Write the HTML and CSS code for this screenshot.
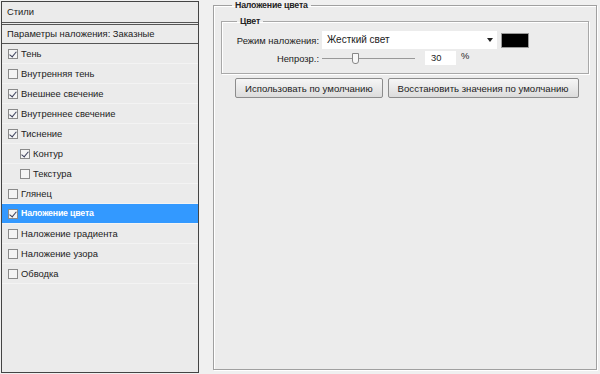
FILE: index.html
```html
<!DOCTYPE html>
<html lang="ru">
<head>
    <meta charset="UTF-8">
    <title>Стиль слоя</title>
    <link rel="stylesheet" href="styles.css">
</head>
<body>
    <div class="dialog">
        <aside class="styles-panel">
            <div class="panel-head">Стили</div>
            <div class="panel-sub">Параметры наложения: Заказные</div>
            <ul class="style-list">
                <li><span class="box checked"></span>Тень</li>
                <li><span class="box"></span>Внутренняя тень</li>
                <li><span class="box checked"></span>Внешнее свечение</li>
                <li><span class="box checked"></span>Внутреннее свечение</li>
                <li><span class="box checked"></span>Тиснение</li>
                <li class="sub"><span class="box checked"></span>Контур</li>
                <li class="sub"><span class="box"></span>Текстура</li>
                <li><span class="box"></span>Глянец</li>
                <li class="active"><span class="box checked"></span>Наложение цвета</li>
                <li><span class="box"></span>Наложение градиента</li>
                <li><span class="box"></span>Наложение узора</li>
                <li><span class="box"></span>Обводка</li>
            </ul>
        </aside>

        <fieldset class="options">
            <legend>Наложение цвета</legend>
            <fieldset class="group">
                <legend>Цвет</legend>
                <div class="row">
                    <label>Режим наложения:</label>
                    <div class="select">Жесткий свет<span class="arrow"></span></div>
                    <div class="swatch"></div>
                </div>
                <div class="row">
                    <label>Непрозр.:</label>
                    <div class="slider"><span class="thumb"></span></div>
                    <div class="num">30</div>
                    <span class="unit">%</span>
                </div>
            </fieldset>
            <div class="buttons">
                <button>Использовать по умолчанию</button>
                <button>Восстановить значения по умолчанию</button>
            </div>
        </fieldset>
    </div>
</body>
</html>
```

FILE: styles.css
```css
body {
    margin: 0;
    background: #f0f0f0;
    font-family: 'Liberation Sans', Arial, sans-serif;
    font-size: 9.4px;
    color: #222;
}

.dialog {
    display: flex;
    height: 374px;
}

/* left list */
.styles-panel {
    width: 196px;
    height: 370px;
    margin: 1px 0 0 1px;
    border: 1px solid #444;
    background: #ebebeb;
    display: flex;
    flex-direction: column;
}

.panel-head {
    height: 20px;
    line-height: 19px;
    padding-left: 5px;
    border-bottom: 3px double #555;
}

.panel-sub {
    height: 18px;
    line-height: 18px;
    padding-left: 5px;
    border-bottom: 1px solid #555;
}

.style-list {
    list-style: none;
    margin: 0;
    padding: 0;
}

.style-list li {
    height: 19px;
    line-height: 19px;
    border-bottom: 1px solid #f3f3f3;
    padding-left: 6px;
    display: flex;
    align-items: center;
}

.style-list li.sub {
    padding-left: 18px;
}

.style-list li.active {
    background: #3399ff;
    color: #fff;
}

.style-list li.active,
legend {
    font-weight: bold;
    font-size: 8.8px;
    letter-spacing: -0.2px;
}

.box {
    width: 8px;
    height: 8px;
    border: 1px solid #8a8a8a;
    background: #f4f4f4;
    margin-right: 3px;
    position: relative;
}

.box.checked::after {
    content: "";
    position: absolute;
    left: 2px;
    top: 0;
    width: 3px;
    height: 6px;
    border: solid #3a3f5a;
    border-width: 0 1px 1px 0;
    transform: rotate(40deg);
}

/* right options */
.options {
    margin: 0 0 0 14px;
    width: 368px;
    height: 368px;
    padding: 0 7px;
    border: 1px solid #a0a0a0;
    box-shadow: inset 1px 1px 0 #fff, 1px 1px 0 #fff;
    background: #ececec;
}

.options > legend {
    padding: 0 3px;
    margin-left: 11px;
    line-height: 10px;
}

.group {
    margin: 6px 0 0;
    padding: 5px 0 6px;
    border: 1px solid #a8a8a8;
    box-shadow: inset 1px 1px 0 #fff, 1px 1px 0 #fff;
}

.group > legend {
    padding: 0 3px;
    margin-left: 15px;
}

.row {
    display: flex;
    align-items: center;
    height: 18px;
}

.row label {
    width: 97px;
    text-align: right;
    padding-right: 3px;
}

.select {
    width: 170px;
    height: 18px;
    line-height: 18px;
    background: #fff;
    padding-left: 5px;
    font-size: 10px;
    position: relative;
}

.arrow {
    position: absolute;
    right: 4px;
    top: 7px;
    border: 3px solid transparent;
    border-top: 4px solid #222;
}

.swatch {
    width: 26px;
    height: 13px;
    background: #000;
    border: 1px solid #999;
    margin-left: 4px;
}

.slider {
    width: 93px;
    height: 1px;
    background: #999;
    position: relative;
    margin-right: 10px;
}

.thumb {
    position: absolute;
    left: 30px;
    top: -5px;
    width: 5px;
    height: 9px;
    background: #f8f8f8;
    border: 1px solid #888;
    border-radius: 0 0 3px 3px;
}

.num {
    width: 25px;
    height: 14px;
    line-height: 14px;
    background: #fff;
    padding-left: 6px;
}

.unit {
    margin-left: 5px;
    margin-top: -5px;
}

.buttons {
    display: flex;
    gap: 5px;
    margin: 4px 0 0 14px;
}

.buttons button {
    height: 20px;
    padding: 0 9px;
    font-family: inherit;
    font-size: 9.6px;
    color: #222;
    background: linear-gradient(#f6f6f6, #dcdcdc);
    border: 1px solid #8c8c8c;
    border-radius: 2px;
}
```
